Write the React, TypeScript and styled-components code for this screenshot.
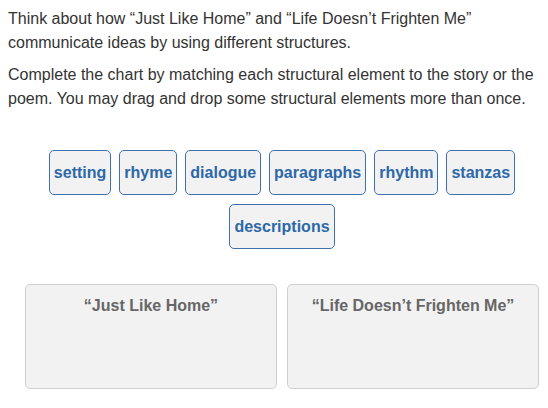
import styled, { createGlobalStyle } from "styled-components";

const GlobalStyle = createGlobalStyle`
  body {
    margin: 0;
    background: #fff;
    font-family: "Liberation Sans", Arial, sans-serif;
  }
`;

const Page = styled.div`
  padding: 7px 8px 0 8px;
  color: #333;
`;

const Prompt = styled.p`
  margin: 0 0 8px 0;
  font-size: 16px;
  line-height: 24px;
`;

const Board = styled.div`
  margin: 39px 1px 0 17px;
`;

const Bank = styled.div`
  display: flex;
  flex-wrap: wrap;
  justify-content: center;
  gap: 9px 8px;
`;

const Tile = styled.div`
  display: flex;
  align-items: center;
  height: 45px;
  box-sizing: border-box;
  padding: 0 4px;
  border: 1px solid #3d72ad;
  border-radius: 5px;
  background: #f2f2f2;
  color: #2d68a8;
  font-weight: bold;
  font-size: 16px;
`;

const Chart = styled.div`
  display: grid;
  grid-template-columns: 1fr 1fr;
  gap: 10px;
  margin-top: 35px;
`;

const Column = styled.div`
  height: 105px;
  box-sizing: border-box;
  padding-top: 11px;
  border: 1px solid #cfcfcf;
  border-radius: 5px;
  background: #f2f2f2;
  text-align: center;
`;

const ColumnTitle = styled.div`
  color: #666;
  font-weight: bold;
  font-size: 16px;
  line-height: 20px;
`;

const tiles = [
  "setting",
  "rhyme",
  "dialogue",
  "paragraphs",
  "rhythm",
  "stanzas",
  "descriptions",
];

const columns = ["\u201cJust Like Home\u201d", "\u201cLife Doesn\u2019t Frighten Me\u201d"];

export default function App() {
  return (
    <>
      <GlobalStyle />
      <Page>
        <Prompt>
          Think about how “Just Like Home” and “Life Doesn’t Frighten Me”
          communicate ideas by using different structures.
        </Prompt>
        <Prompt>
          Complete the chart by matching each structural element to the story or the
          poem. You may drag and drop some structural elements more than once.
        </Prompt>
        <Board>
          <Bank>
            {tiles.map((t) => (
              <Tile key={t}>{t}</Tile>
            ))}
          </Bank>
          <Chart>
            {columns.map((c) => (
              <Column key={c}>
                <ColumnTitle>{c}</ColumnTitle>
              </Column>
            ))}
          </Chart>
        </Board>
      </Page>
    </>
  );
}
